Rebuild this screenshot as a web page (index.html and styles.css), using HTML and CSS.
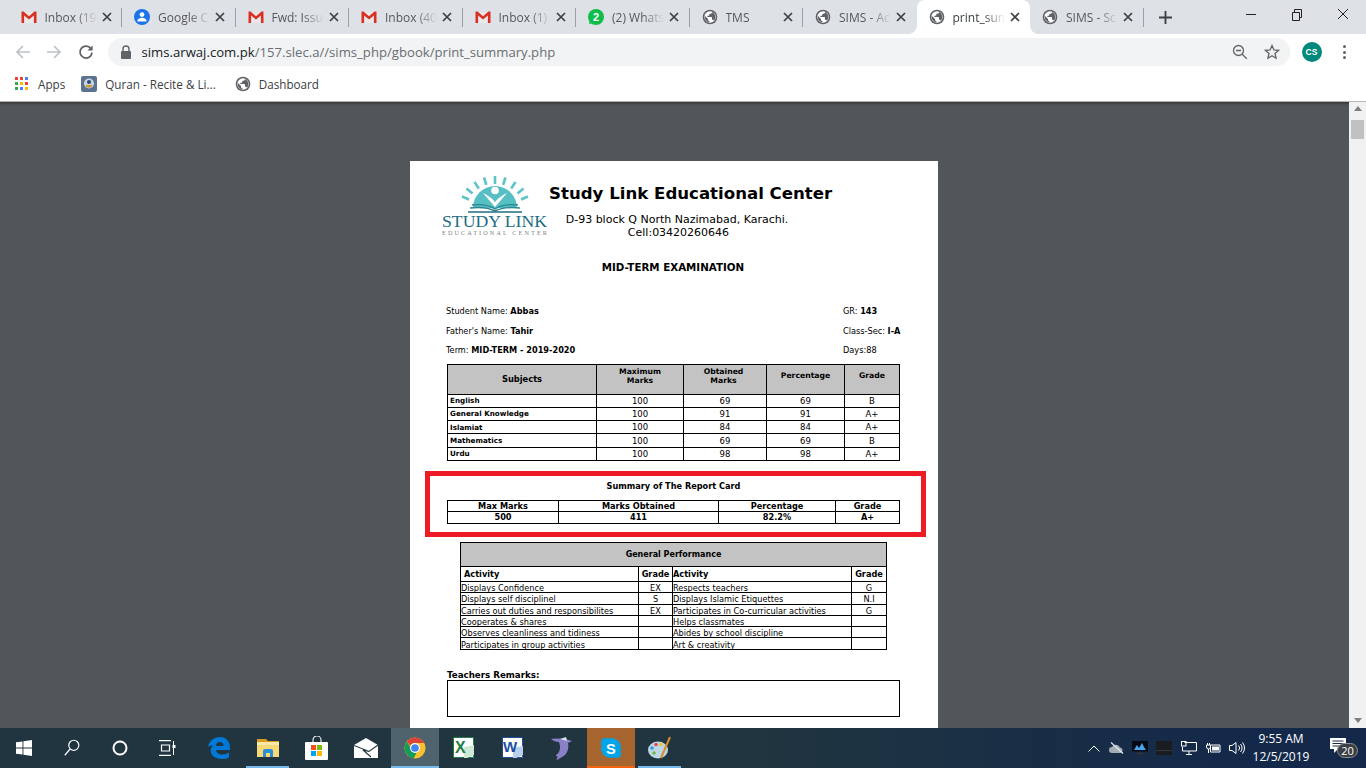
FILE: index.html
```html
<!DOCTYPE html>
<html lang="en">
<head>
<meta charset="utf-8">
<title>print_summary</title>
<link rel="stylesheet" href="styles.css">
</head>
<body>
<svg class="defs" width="0" height="0" aria-hidden="true">
  <symbol id="gmail" viewBox="0 0 16 16">
    <path fill="#e8e8e8" d="M2 3h12v11H2z"/>
    <path fill="#d93025" d="M0.5 2.5h2L8 7.2l5.5-4.7h2V14h-2.6V6.4L8 10.6 3.1 6.4V14H.5z"/>
  </symbol>
  <symbol id="globe" viewBox="0 0 24 24">
    <circle cx="12" cy="12" r="11" fill="#5f6368"/>
    <circle cx="12" cy="12" r="8.6" fill="#fff"/>
    <path fill="#5f6368" d="M11 19.93c-3.95-.49-7-3.85-7-7.93 0-.62.08-1.21.21-1.79L9 15v1c0 1.1.9 2 2 2v1.93zM17.9 17.39c-.26-.81-1-1.39-1.9-1.39h-1v-3c0-.55-.45-1-1-1H8v-2h2c.55 0 1-.45 1-1V7h2c1.1 0 2-.9 2-2v-.41c2.93 1.19 5 4.06 5 7.41 0 2.08-.8 3.97-2.1 5.39z"/>
  </symbol>
  <symbol id="x" viewBox="0 0 10 10">
    <path d="M1 1l8 8M9 1l-8 8" stroke="#3c4043" stroke-width="1.7" fill="none"/>
  </symbol>
</svg>

<div class="app">
  <header class="tabstrip">
    <div class="tab"><svg class="fav"><use href="#gmail"/></svg><span class="tab-title">Inbox (19</span><svg class="tab-x"><use href="#x"/></svg></div>
    <div class="tab">
      <svg class="fav" viewBox="0 0 16 16"><circle cx="8" cy="8" r="8" fill="#1a73e8"/><circle cx="8" cy="5.6" r="2.4" fill="#fff"/><path d="M3.4 11.8c0-2 3-3 4.6-3s4.6 1 4.6 3v.8H3.4z" fill="#fff"/></svg>
      <span class="tab-title">Google C</span><svg class="tab-x"><use href="#x"/></svg></div>
    <div class="tab"><svg class="fav"><use href="#gmail"/></svg><span class="tab-title">Fwd: Issu</span><svg class="tab-x"><use href="#x"/></svg></div>
    <div class="tab"><svg class="fav"><use href="#gmail"/></svg><span class="tab-title">Inbox (40</span><svg class="tab-x"><use href="#x"/></svg></div>
    <div class="tab"><svg class="fav"><use href="#gmail"/></svg><span class="tab-title">Inbox (1)</span><svg class="tab-x"><use href="#x"/></svg></div>
    <div class="tab">
      <svg class="fav" viewBox="0 0 16 16"><circle cx="8" cy="8" r="8" fill="#0fbd4b"/><path d="M2 11l-1 4 4-1z" fill="#0fbd4b"/><text x="8" y="12" class="wa-num">2</text></svg>
      <span class="tab-title">(2) Whats</span><svg class="tab-x"><use href="#x"/></svg></div>
    <div class="tab"><svg class="fav"><use href="#globe"/></svg><span class="tab-title">TMS</span><svg class="tab-x"><use href="#x"/></svg></div>
    <div class="tab no-sep"><svg class="fav"><use href="#globe"/></svg><span class="tab-title">SIMS - Ac</span><svg class="tab-x"><use href="#x"/></svg></div>
    <div class="tab tab-active"><svg class="fav"><use href="#globe"/></svg><span class="tab-title">print_sum</span><svg class="tab-x"><use href="#x"/></svg></div>
    <div class="tab"><svg class="fav"><use href="#globe"/></svg><span class="tab-title">SIMS - Sc</span><svg class="tab-x"><use href="#x"/></svg></div>
    <svg class="newtab" viewBox="0 0 12 12"><path d="M6 0v12M0 6h12" stroke="#3c4043" stroke-width="1.7"/></svg>
    <div class="winctl">
      <svg viewBox="0 0 46 28"><path d="M18 14.5h10" stroke="#222" stroke-width="1"/></svg>
      <svg viewBox="0 0 46 28"><path d="M18.5 12.5h7v8h-7zM20.5 12.5v-3h7v8h-2" stroke="#222" fill="none"/></svg>
      <svg viewBox="0 0 46 28"><path d="M18 9l10 10M28 9L18 19" stroke="#222" fill="none"/></svg>
    </div>
  </header>

  <div class="toolbar">
    <svg class="nav nav-first" viewBox="0 0 16 16"><path d="M15 8H2M8 2L2 8l6 6" stroke="#bdc1c6" stroke-width="1.7" fill="none"/></svg>
    <svg class="nav" viewBox="0 0 16 16"><path d="M1 8h13M8 2l6 6-6 6" stroke="#bdc1c6" stroke-width="1.7" fill="none"/></svg>
    <svg class="nav" viewBox="0 0 16 16"><path d="M13.2 5A6 6 0 1 0 14 8.6" stroke="#5f6368" stroke-width="1.8" fill="none"/><path d="M14.6 1.4v5.2H9.4z" fill="#5f6368"/></svg>
    <div class="omnibox">
      <svg class="lock" viewBox="0 0 12 14"><path d="M3 6V4a3 3 0 0 1 6 0v2" stroke="#5f6368" stroke-width="1.4" fill="none"/><rect x="1" y="6" width="10" height="8" rx="1" fill="#5f6368"/></svg>
      <span class="url"><span class="host">sims.arwaj.com.pk</span>/157.slec.a//sims_php/gbook/print_summary.php</span>
      <svg class="omni-zoom" viewBox="0 0 16 16"><circle cx="6.5" cy="6.5" r="5" stroke="#5f6368" stroke-width="1.3" fill="none"/><path d="M10.2 10.2l4.6 4.6M4 6.5h5" stroke="#5f6368" stroke-width="1.3"/></svg>
      <svg class="omni-star" viewBox="0 0 16 16"><path d="M8 1.6l1.9 4.4 4.7.4-3.6 3.1 1.1 4.7L8 11.7l-4.1 2.5L5 9.5 1.4 6.4l4.7-.4z" stroke="#5f6368" stroke-width="1.3" fill="none"/></svg>
    </div>
    <div class="avatar">CS</div>
    <div class="dots"><i></i><i></i><i></i></div>
  </div>

  <div class="bookmarks">
    <div class="bm bm-apps">
      <svg class="bm-grid" viewBox="0 0 13 13">
        <rect x="0" y="0" width="3" height="3" fill="#ea4335"/><rect x="5" y="0" width="3" height="3" fill="#ea4335"/><rect x="10" y="0" width="3" height="3" fill="#4285f4"/>
        <rect x="0" y="5" width="3" height="3" fill="#34a853"/><rect x="5" y="5" width="3" height="3" fill="#fbbc05"/><rect x="10" y="5" width="3" height="3" fill="#ea4335"/>
        <rect x="0" y="10" width="3" height="3" fill="#34a853"/><rect x="5" y="10" width="3" height="3" fill="#4285f4"/><rect x="10" y="10" width="3" height="3" fill="#fbbc05"/>
      </svg>
      <span>Apps</span>
    </div>
    <div class="bm bm-quran">
      <svg class="bm-ico" viewBox="0 0 16 16"><rect width="16" height="16" rx="2" fill="#5c7390"/><circle cx="8" cy="7.5" r="5" fill="#c8d6e6"/><path d="M4.5 9a3.6 3.6 0 0 0 7 0z" fill="#c79a3c"/><circle cx="8" cy="6" r="2" fill="#2e4a6e"/></svg>
      <span>Quran - Recite &amp; Li...</span>
    </div>
    <div class="bm bm-dash">
      <svg class="bm-ico" viewBox="0 0 24 24"><use href="#globe"/></svg>
      <span>Dashboard</span>
    </div>
  </div>

  <div class="viewer">
    <main class="viewport">
      <article class="page">
        <section class="head">
          <svg class="logo" viewBox="0 0 105 60" role="img" aria-label="Study Link logo">
            <g stroke="#5cc4c7" stroke-width="2.6">
              <path d="M53 0v8M42 1.500l2.400 7.300M63.500 1.500l-2.400 7.300M32.500 6l4.300 6.400M73.500 6l-4.300 6.400M24.500 12.500l6 5M81.500 12.500l-6 5M20 20.500l7 3M86 20.500l-7 3"/>
            </g>
            <path d="M31 32a22 22 0 0 1 44 0z" fill="#55bfc3"/>
            <circle cx="53" cy="14.500" r="3.800" fill="#fff"/>
            <path d="M41 17c4 2 8 4 12 9 4-5 8-7 12-9-4 5-8 9-12 14-4-5-8-9-12-14z" fill="#fff"/>
            <path d="M30 29c8-1 17 0 23 4 6-4 15-5 23-4M28 32c9-1 19 0 25 3 6-3 16-4 25-3" stroke="#2d8793" stroke-width="1.400" fill="none"/>
            <path d="M26 36h54" stroke="#1f6e82" stroke-width="1.500"/>
            <text x="0" y="51" class="logo-main" textLength="105" lengthAdjust="spacingAndGlyphs">STUDY LINK</text>
            <text x="0" y="59" class="logo-sub" textLength="105">EDUCATIONAL CENTER</text>
          </svg>
          <div class="school">
            <h1 class="school-name">Study Link Educational Center</h1>
            <p class="school-addr">D-93 block Q North Nazimabad, Karachi.<br><span class="cell">Cell:03420260646</span></p>
          </div>
        </section>
        <h2 class="exam">MID-TERM EXAMINATION</h2>

        <section class="info">
          <div class="info-row"><span>Student Name: <b>Abbas</b></span><span class="info-r">GR: <b>143</b></span></div>
          <div class="info-row"><span>Father's Name: <b>Tahir</b></span><span class="info-r">Class-Sec: <b>I-A</b></span></div>
          <div class="info-row"><span>Term: <b>MID-TERM - 2019-2020</b></span><span class="info-r">Days:88</span></div>
        </section>

        <table class="grid marks">
          <colgroup><col class="m1"><col class="m2"><col class="m3"><col class="m4"><col class="m5"></colgroup>
          <thead>
            <tr><th>Subjects</th><th class="th-top">Maximum<br>Marks</th><th class="th-top th-obt">Obtained<br>Marks</th><th class="th-mid">Percentage</th><th class="th-mid">Grade</th></tr>
          </thead>
          <tbody>
            <tr><td class="subj">English</td><td>100</td><td>69</td><td>69</td><td>B</td></tr>
            <tr><td class="subj">General Knowledge</td><td>100</td><td>91</td><td>91</td><td>A+</td></tr>
            <tr><td class="subj">Islamiat</td><td>100</td><td>84</td><td>84</td><td>A+</td></tr>
            <tr><td class="subj">Mathematics</td><td>100</td><td>69</td><td>69</td><td>B</td></tr>
            <tr><td class="subj">Urdu</td><td>100</td><td>98</td><td>98</td><td>A+</td></tr>
          </tbody>
        </table>

        <section class="summary">
          <h3 class="summary-title">Summary of The Report Card</h3>
          <table class="grid sum">
            <colgroup><col class="s1"><col class="s2"><col class="s3"><col class="s4"></colgroup>
            <tbody>
              <tr><td>Max Marks</td><td>Marks Obtained</td><td>Percentage</td><td>Grade</td></tr>
              <tr><td>500</td><td>411</td><td>82.2%</td><td>A+</td></tr>
            </tbody>
          </table>
        </section>

        <table class="grid perf">
          <colgroup><col class="p1"><col class="p2"><col class="p3"><col class="p4"></colgroup>
          <thead>
            <tr class="perf-head"><th colspan="4">General Performance</th></tr>
            <tr class="perf-cols"><td class="pad">Activity</td><td>Grade</td><td class="left">Activity</td><td>Grade</td></tr>
          </thead>
          <tbody>
            <tr><td class="left">Displays Confidence</td><td>EX</td><td class="left">Respects teachers</td><td>G</td></tr>
            <tr><td class="left">Displays self disciplinel</td><td>S</td><td class="left">Displays Islamic Etiquettes</td><td>N.I</td></tr>
            <tr><td class="left">Carries out duties and responsibilites</td><td>EX</td><td class="left">Participates in Co-curricular activities</td><td>G</td></tr>
            <tr><td class="left">Cooperates &amp; shares</td><td></td><td class="left">Helps classmates</td><td></td></tr>
            <tr><td class="left">Observes cleanliness and tidiness</td><td></td><td class="left">Abides by school discipline</td><td></td></tr>
            <tr><td class="left">Participates in group activities</td><td></td><td class="left">Art &amp; creativity</td><td></td></tr>
          </tbody>
        </table>

        <p class="remarks-label">Teachers Remarks:</p>
        <div class="remarks-box"></div>
      </article>
    </main>
    <aside class="scrollbar">
      <span class="sb-up"></span>
      <span class="sb-thumb"></span>
      <span class="sb-down"></span>
    </aside>
  </div>

  <footer class="taskbar">
    <div class="tb tb-sys">
      <svg viewBox="0 0 16 16" class="ic16"><path fill="#fff" d="M0 2.300l6.500-.9v6.200H0zM7.400 1.300L16 0v7.600H7.400zM0 8.400h6.500v6.200L0 13.700zM7.400 8.400H16V16l-8.600-1.200z"/></svg>
    </div>
    <div class="tb tb-sys">
      <svg viewBox="0 0 18 20" class="ic18"><circle cx="11" cy="7" r="5.600" stroke="#fff" stroke-width="1.300" fill="none"/><path d="M7 11l-6 7" stroke="#fff" stroke-width="1.500"/></svg>
    </div>
    <div class="tb tb-sys">
      <svg viewBox="0 0 16 16" class="ic16"><circle cx="8" cy="8" r="6.500" stroke="#fff" stroke-width="2" fill="none"/></svg>
    </div>
    <div class="tb tb-sys">
      <svg viewBox="0 0 18 16" class="ic18"><path d="M0 .7h12M0 15.300h12M2.500 5h8v6h-8z" stroke="#fff" stroke-width="1.200" fill="none"/><path d="M14.500 1v14" stroke="#fff" stroke-width="1"/><rect x="13.500" y="5" width="3" height="3" fill="#fff"/></svg>
    </div>
    <div class="tb tb-app tb-first">
      <svg viewBox="0 0 22 22" class="ic22"><path fill="#0078d7" fill-rule="evenodd" d="M0 10C1 4 6 0 12 0c6 0 10 4 10 11v2H8c.3 3 3 4.500 6 4.500 2.500 0 5-.7 7-2v5C19 21.500 16 22 13.500 22 7 22 2.700 18 2.700 13.500c0-2.500 1-4 2.300-5.500C3 8.500 1 9 0 10zM8 9h7.500C15.500 6.500 14 5 11.800 5 9.600 5 8 6.500 8 9z"/></svg>
    </div>
    <div class="tb tb-app tb-run">
      <svg viewBox="0 0 22 20" class="ic22"><path fill="#d69b1f" d="M0 1h9l2 2h11v4H0z"/><path fill="#f8d775" d="M0 4h22v15H0z"/><path fill="#f8e9a8" d="M0 4h22v3H0z"/><path fill="#2a8fd8" d="M6 19v-6a2 2 0 0 1 2-2h6a2 2 0 0 1 2 2v6h-3v-4H9v4z"/></svg>
    </div>
    <div class="tb tb-app">
      <svg viewBox="0 0 24 24" class="ic24"><path d="M8 7V4a4 4 0 0 1 8 0v3" stroke="#e6e6e6" stroke-width="1.200" fill="none"/><rect y="6" width="23" height="18" rx="1" fill="#fff"/><rect x="6" y="9" width="5" height="5" fill="#f25022"/><rect x="12" y="9" width="5" height="5" fill="#7fba00"/><rect x="6" y="15" width="5" height="5" fill="#00a4ef"/><rect x="12" y="15" width="5" height="5" fill="#ffb900"/></svg>
    </div>
    <div class="tb tb-app">
      <svg viewBox="0 0 24 20" class="ic24"><path fill="#fff" d="M12 0L24 7V20H0V7z"/><path d="M0 7.500l15 6 9-6.500M15 13.500l-6-1.500 8 7" stroke="#20353f" stroke-width="1.100" fill="none"/></svg>
    </div>
    <div class="tb tb-app tb-run tb-chrome">
      <svg viewBox="0 0 24 24" class="ic22">
        <circle cx="12" cy="12" r="11.500" fill="#fbc02d"/>
        <path d="M12 .5A11.500 11.500 0 0 1 22 6.500H12a5.500 5.500 0 0 0-5 3L3.300 4.800A11.500 11.500 0 0 1 12 .5z" fill="#db4437"/>
        <path d="M3.300 4.800L8 13a5.500 5.500 0 0 0 5.700 4.300L10.400 23.400A11.500 11.500 0 0 1 3.300 4.800z" fill="#0f9d58"/>
        <circle cx="12" cy="12" r="5.400" fill="#fff"/><circle cx="12" cy="12" r="4.200" fill="#4285f4"/>
      </svg>
    </div>
    <div class="tb tb-app">
      <svg viewBox="0 0 22 22" class="ic22"><path fill="#fff" d="M1 1h20v20H1z"/><path fill="none" stroke="#1e7e45" d="M.5.500h20v20H.5z"/><path fill="#cfe8d3" d="M11 10l10-2v10l-7 3h-3z"/><text x="2" y="16" class="xl">X</text></svg>
    </div>
    <div class="tb tb-app">
      <svg viewBox="0 0 22 22" class="ic22"><path fill="#fff" d="M1 1h20v20H1z"/><path fill="none" stroke="#1d4f9e" d="M.5.500h20v20H.5z"/><path fill="#b8cfee" d="M11 11l10-2v9l-7 3h-3z"/><text x="1" y="15" class="wd">W</text></svg>
    </div>
    <div class="tb tb-app">
      <svg viewBox="0 0 22 24" class="ic24"><path fill="#8a80c8" d="M0 3c5-1 15-1 21 2l-4 2c1 5 0 11-6 14l-5 3c-1-1 0-2 1-3-1 0-2-1-2-2 4-2 5-8 3-13C5 6 2 5 0 3z"/><path fill="#dfe2f2" d="M9 3l6-2 1 4z"/></svg>
    </div>
    <div class="tb tb-app tb-skype">
      <svg viewBox="0 0 24 24" class="ic22"><circle cx="12" cy="12" r="11" fill="#00a4e8"/><circle cx="6" cy="6" r="5" fill="#00a4e8"/><circle cx="18" cy="18" r="5" fill="#00a4e8"/><text x="12" y="18" class="sk">S</text></svg>
    </div>
    <div class="tb tb-app tb-run">
      <svg viewBox="0 0 24 24" class="ic24"><ellipse cx="10" cy="14" rx="10" ry="8.500" fill="#bcd8e6"/><circle cx="4" cy="12" r="1.800" fill="#3a9ad9"/><circle cx="8" cy="8.500" r="1.800" fill="#e34b4b"/><circle cx="13" cy="8.500" r="1.800" fill="#f2c230"/><circle cx="6" cy="17" r="1.800" fill="#6bb84a"/><path d="M22 1l-9 21" stroke="#d98a2b" stroke-width="2"/></svg>
    </div>

    <div class="tray">
      <svg class="tr tr-chev" viewBox="0 0 12 7"><path d="M.5 6.500L6 1l5.500 5.500" stroke="#fff" fill="none"/></svg>
      <svg class="tr tr-cloud" viewBox="0 0 16 12"><path d="M4 11a3 3 0 0 1 0-6 4.500 4.500 0 0 1 8 .5 2.800 2.800 0 0 1 .5 5.500z" fill="#a3acb5"/><path d="M3 .5L15 11.500" stroke="#e6e9ed" stroke-width="1.200"/></svg>
      <svg class="tr tr-screen" viewBox="0 0 16 14"><rect width="16" height="10.500" fill="#060a14"/><path d="M2 9l3-5 2 3 3-5 2 4 2 3z" fill="#4aa3e8"/><path d="M5 12.500h6" stroke="#333" stroke-width="2"/></svg>
      <svg class="tr tr-box" viewBox="0 0 16 14"><rect width="16" height="14" fill="#1a1d20"/><rect y="9" width="16" height="1" fill="#33383c"/></svg>
      <svg class="tr tr-net" viewBox="0 0 16 14"><path d="M3.500 1.500H15.500V10H1.500V6M8 10v3M5 13.500h6" stroke="#fff" fill="none"/><rect x=".5" y=".5" width="4.500" height="4.500" fill="none" stroke="#fff"/></svg>
      <svg class="tr tr-bat" viewBox="0 0 16 12"><path d="M5.500 3h9.500v7H5.500z" stroke="#fff" fill="none"/><rect x="7" y="4.500" width="7" height="4" fill="#fff"/><path d="M2.500 1v2M4.500 1v2M1.500 3h4v2a2 2 0 0 1-4 0zM3.500 7v4" stroke="#fff" fill="none"/></svg>
      <svg class="tr tr-vol" viewBox="0 0 16 14"><path d="M.5 4.500h2.500L7 1.500v11L3 9.500H.5z" stroke="#fff" fill="none"/><path d="M9.500 4.500a3.500 3.500 0 0 1 0 5M11.500 3a6 6 0 0 1 0 8M13.500 1.500a8.500 8.500 0 0 1 0 11" stroke="#fff" fill="none"/></svg>
      <div class="clock"><span>9:55 AM</span><span>12/5/2019</span></div>
      <div class="notif">
        <svg class="notif-ic" viewBox="0 0 16 15"><path fill="#fff" d="M0 0h16v11H8l-4 4v-4H0z"/><path d="M2.500 3h11M2.500 5.500h11M2.500 8h8" stroke="#1a2c47"/></svg>
        <span class="badge">20</span>
      </div>
    </div>
  </footer>
</div>
</body>
</html>
```
FILE: styles.css
```css
* { box-sizing: border-box; }
html, body { margin: 0; padding: 0; height: 100%; overflow: hidden; }
body { font-family: "Open Sans", "Noto Sans", sans-serif; color: #000; }
.defs { position: absolute; }
svg { display: block; flex: none; }

.app { display: flex; flex-direction: column; height: 768px; width: 1366px; }

/* tab strip */
.tabstrip { display: flex; align-items: stretch; height: 34px; background: #dee1e6; padding-left: 8.5px; }
.tab { position: relative; width: 113.5px; height: 34px; display: flex; align-items: center; padding-left: 12px; font-size: 12px; color: #55585d; }
.tab::after { content: ""; position: absolute; right: 0; top: 8px; height: 19px; width: 1px; background: #9aa0a6; }
.no-sep::after { display: none; }
.tab-active { background: #fff; border-radius: 8px 8px 0 0; color: #3c4043; }
.tab-active::before, .tab-active::after { content: ""; position: absolute; top: auto; bottom: 0; width: 8px; height: 8px; background: radial-gradient(circle at 0 0, #dee1e6 7.5px, #fff 8px); }
.tab-active::before { left: -8px; right: auto; }
.tab-active::after { right: -8px; background: radial-gradient(circle at 100% 0, #dee1e6 7.5px, #fff 8px); }
.fav { width: 16px; height: 16px; }
.tab-title { width: 52px; margin-left: 8px; white-space: nowrap; overflow: hidden; -webkit-mask-image: linear-gradient(90deg, #000 60%, transparent); mask-image: linear-gradient(90deg, #000 60%, transparent); }
.tab-x { width: 10px; height: 10px; margin-left: 5px; }
.wa-num { font: bold 11px "Liberation Sans", sans-serif; fill: #fff; text-anchor: middle; }
.newtab { width: 13px; height: 13px; margin: 11px 0 0 15px; }
.winctl { display: flex; margin-left: auto; }
.winctl svg { width: 46px; height: 28px; }

/* toolbar */
.toolbar { display: flex; align-items: center; height: 34px; background: #fff; padding-top: 2px; }
.nav { width: 16px; height: 16px; margin-left: 15.5px; }
.nav-first { margin-left: 14.5px; }
.omnibox { display: flex; align-items: center; width: 1182px; height: 28px; margin-left: 14px; border-radius: 14px; background: #f1f3f4; padding-left: 12px; }
.lock { width: 12px; height: 14px; }
.url { margin-left: 10px; font-size: 13.15px; color: #6a6e73; white-space: nowrap; }
.host { color: #202124; }
.omni-zoom { width: 16px; height: 16px; margin-left: auto; }
.omni-star { width: 16px; height: 16px; margin: 0 10px 0 16px; }
.avatar { width: 20px; height: 20px; margin-left: 12px; border-radius: 50%; background: #00897b; color: #fff; font: bold 8.5px/20px "Liberation Sans", sans-serif; text-align: center; }
.dots { display: flex; flex-direction: column; gap: 2.500px; margin-left: 21px; }
.dots i { display: block; width: 3px; height: 3px; border-radius: 50%; background: #5f6368; }

/* bookmarks */
.bookmarks { display: flex; align-items: center; height: 34px; background: #fff; border-bottom: 1px solid #b5b5b5; padding: 0 0 2px 15px; font-size: 11.7px; color: #3c4043; }
.bm { display: flex; align-items: center; }
.bm-grid { width: 13px; height: 13px; margin-right: 10px; }
.bm-ico { width: 16px; height: 16px; margin-right: 8px; }
.bm-quran { margin-left: 16px; }
.bm-dash { margin-left: 20px; }
.bm-dash .bm-ico { margin-left: -1px; }

/* viewer */
.viewer { flex: 1; display: flex; min-height: 0; overflow: hidden; background: #525659; }
.viewport { flex: 1; padding: 59px 0 0 410px; overflow: hidden; box-shadow: inset 0 4px 3px -3px #2a2c2e; }
.page { width: 528px; height: 700px; background: #fff; padding-top: 15px; }
.scrollbar { width: 17px; background: #f1f1f1; display: flex; flex-direction: column; align-items: center; padding-top: 4px; position: relative; }
.sb-up { width: 0; height: 0; border: 4px solid transparent; border-top: 0; border-bottom: 5px solid #7f7f7f; }
.sb-thumb { width: 13px; height: 19px; margin-top: 9px; background: #c1c1c1; }
.sb-down { width: 0; height: 0; border: 4px solid transparent; border-bottom: 0; border-top: 5px solid #7f7f7f; margin-top: auto; margin-bottom: 5px; }

/* report header */
.page, .page table { font-family: "DejaVu Sans", sans-serif; }
.head { display: flex; padding-left: 32px; height: 60px; }
.logo { width: 105px; height: 60px; }
.logo-main { font: 17px "Liberation Serif", serif; fill: #1b6d83; }
.logo-sub { font: 6.2px "Liberation Serif", serif; fill: #808080; }
.school { margin-left: 2px; padding-top: 7px; }
.school-name { margin: 0; font-size: 16.6px; line-height: 22px; font-weight: bold; white-space: nowrap; }
.school-addr { margin: 8px 0 0; width: 256px; font-size: 11px; line-height: 13px; text-align: center; }
.cell { padding-left: 3px; }
.exam { margin: 24px 0 0; height: 14px; padding-right: 2px; font-size: 10.3px; line-height: 14px; font-weight: bold; text-align: center; }

.info { margin: 31px 0 0 36px; font-size: 8.200px; }
.info-row { display: grid; grid-template-columns: 397px auto; height: 19.500px; line-height: 13px; }
.info-r { white-space: nowrap; }

/* tables */
.grid { border-collapse: collapse; table-layout: fixed; font-size: 8.500px; color: #000; }
.grid th, .grid td { border: 1px solid #000; padding: 0; text-align: center; vertical-align: middle; line-height: 9px; }
.marks { margin: 0 0 0 37px; width: 452px; }
.m1 { width: 149px; } .m2 { width: 87px; } .m3 { width: 83px; } .m4 { width: 78px; } .m5 { width: 55px; }
.marks th { height: 30px; background: #c3c3c3; font-size: 7.700px; }
.marks th:first-child { font-size: 8.300px; }
.marks .th-top { padding-bottom: 6px; }
.marks .th-obt { padding-right: 3px; }
.marks .th-mid { padding-bottom: 8px; }
.marks td { height: 13.300px; padding-top: 1px; }
.marks .subj { text-align: left; padding: 0 0 0 2px; font-weight: bold; font-size: 7.200px; }

.summary { width: 501px; height: 66px; margin: 10px 0 0 15px; border: 5px solid #ed1c24; padding-left: 17px; }
.summary-title { margin: 4px 0 0; width: 453px; height: 12px; font-size: 8.200px; line-height: 12px; font-weight: bold; text-align: center; }
.sum { width: 452px; margin-top: 8px; font-weight: bold; font-size: 8.200px; }
.s1 { width: 111px; } .s2 { width: 160px; } .s3 { width: 117px; } .s4 { width: 64px; }
.sum td { height: 11.300px; line-height: 10px; }

.perf { width: 426px; margin: 5px 0 0 50px; }
.p1 { width: 178px; } .p2 { width: 34px; } .p3 { width: 179px; } .p4 { width: 35px; }
.perf td { height: 11.300px; line-height: 10px; font-size: 8.200px; }
.perf tbody td { padding-top: 2px; line-height: 8px; }
.perf-head th { height: 24px; background: #c3c3c3; font-size: 8px; font-weight: bold; }
.perf-cols td { height: 15px; font-weight: bold; }
.perf .left { text-align: left; }
.perf .pad { text-align: left; padding-left: 3px; }

.remarks-label { margin: 19px 0 0 37px; height: 11px; font-size: 8.700px; line-height: 12px; font-weight: bold; }
.remarks-box { width: 453px; height: 37px; margin: 0 0 0 37px; border: 1px solid #000; }

/* taskbar */
.taskbar { display: flex; height: 40px; flex: none; background: linear-gradient(90deg, #20353f 0, #20353f 55%, #14294a 90%); color: #fff; }
.tb { position: relative; height: 40px; display: flex; align-items: center; justify-content: center; }
.tb-sys { width: 48px; }
.tb-app { width: 49px; }
.tb-first { margin-left: 2px; }
.tb-run::after { content: ""; position: absolute; left: 3px; right: 3px; bottom: 0; height: 2px; background: #76b9ed; }
.tb-chrome { background: linear-gradient(#4e636c, #4e636c) center / 48px 100% no-repeat; }
.tb-chrome::after { left: .5px; right: .5px; }
.tb-skype { background: linear-gradient(#a6652f, #a6652f) center / 48px 100% no-repeat; }
.tb-skype::after { content: ""; position: absolute; left: .5px; right: .5px; bottom: 0; height: 2px; background: #f7630c; }
.ic16 { width: 16px; height: 16px; }
.ic18 { width: 18px; height: 18px; }
.ic22 { width: 22px; height: 22px; }
.ic24 { width: 24px; height: 24px; }
.xl { font: bold 16px "Liberation Sans", sans-serif; fill: #1e7e45; }
.wd { font: bold 15px "Liberation Sans", sans-serif; fill: #1d4f9e; }
.sk { font: bold 16px "Liberation Sans", sans-serif; fill: #fff; text-anchor: middle; }

.tray { flex: 1; display: flex; align-items: center; padding-left: 402px; }
.tr { width: 16px; height: 14px; }
.tr-chev { width: 12px; height: 7px; margin: 0 8px 0 2px; }
.tr-cloud { margin-right: 8px; }
.tr-screen { margin-right: 8px; }
.tr-box { margin-right: 9px; }
.tr-net { margin-right: 8px; }
.tr-bat { margin-right: 8px; }
.clock { display: flex; flex-direction: column; align-items: center; width: 62px; margin-left: 5px; font-size: 12px; line-height: 18px; }
.notif { position: relative; margin-left: 14px; width: 28px; height: 40px; }
.notif-ic { position: absolute; left: 4px; top: 10px; width: 16px; height: 15px; }
.badge { position: absolute; left: 11px; top: 15px; width: 21px; height: 15px; border-radius: 8px; background: #3b3f44; border: 1px solid #8a8f94; color: #fff; font: 11px/13px "Open Sans", sans-serif; text-align: center; }
```
